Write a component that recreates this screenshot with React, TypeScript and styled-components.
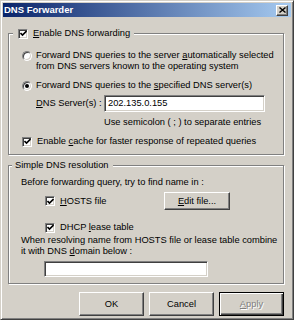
import React from 'react'
import styled, { createGlobalStyle } from 'styled-components'

const GlobalStyle = createGlobalStyle`
  html, body {
    margin: 0;
    padding: 0;
    background: #d4d0c8;
  }
  body {
    font-family: "Liberation Sans", Arial, sans-serif;
    font-size: 9.3px;
    color: #000;
  }
`

const Window = styled.div`
  width: 294px;
  height: 320px;
  box-sizing: border-box;
  padding: 2px;
  background: #d4d0c8;
  border: 1px solid;
  border-color: #d4d0c8 #404040 #404040 #d4d0c8;
  box-shadow: inset 1px 1px #fff, inset -1px -1px #808080;
  display: flex;
  flex-direction: column;
`

const TitleBar = styled.div`
  height: 14px;
  display: flex;
  align-items: center;
  justify-content: space-between;
  padding: 0 3px 0 1px;
  background: linear-gradient(to right, #0a246a, #a6caf0);
`

const TitleText = styled.span`
  color: #fff;
  font-weight: bold;
  font-size: 9.5px;
  line-height: 14px;
`

const CloseButton = styled.div`
  width: 12px;
  height: 11px;
  box-sizing: border-box;
  background: #d4d0c8;
  border: 1px solid;
  border-color: #fff #404040 #404040 #fff;
  box-shadow: inset -1px -1px #808080;
  display: flex;
  align-items: center;
  justify-content: center;
`

const Content = styled.div`
  padding: 0 7px 0 5px;
  display: flex;
  flex-direction: column;
`

const GroupBox = styled.fieldset<{ $mt: number }>`
  margin: ${p => p.$mt}px 0 0;
  padding: 0 0 ${p => p.$pb ?? 7}px;
  border: 1px solid #808080;
  box-shadow: inset 1px 1px #fff, 1px 1px #fff;
  min-width: 0;
  display: flex;
  flex-direction: column;
` as any

const Legend = styled.legend<{ $ml: number; $pl: number }>`
  margin-left: ${p => p.$ml}px;
  padding: 0 4px 0 ${p => p.$pl}px;
  height: 11px;
  line-height: 11px;
  background: #d4d0c8;
`

const LegendInner = styled.span`
  display: flex;
  align-items: center;
  gap: 5px;
  height: 11px;
`

const Row = styled.div<{ $mt?: number; $pl?: number; $gap?: number }>`
  display: flex;
  align-items: center;
  gap: ${p => p.$gap ?? 5}px;
  margin-top: ${p => p.$mt ?? 0}px;
  padding-left: ${p => p.$pl ?? 0}px;
  line-height: 11px;
  white-space: nowrap;
`

const TopRow = styled(Row)`
  align-items: flex-start;
`

const Text = styled.span<{ $w?: number }>`
  line-height: 11px;
  ${p => (p.$w ? `width: ${p.$w}px; flex-shrink: 0;` : '')}
`

const Box = styled.span`
  width: 10px;
  height: 10px;
  flex-shrink: 0;
  box-sizing: border-box;
  background: #fff;
  border: 1px solid;
  border-color: #808080 #fff #fff #808080;
  box-shadow: inset 1px 1px #404040, inset -1px -1px #d4d0c8;
  display: flex;
  align-items: center;
  justify-content: center;
`

const RadioCircle = styled.span<{ $on?: boolean }>`
  width: 10px;
  height: 10px;
  margin-top: 0.5px;
  flex-shrink: 0;
  box-sizing: border-box;
  border-radius: 50%;
  background: #fff;
  border: 1px solid;
  border-color: #808080 #fff #fff #808080;
  box-shadow: inset 1px 1px #404040, inset -1px -1px #d4d0c8;
  display: flex;
  align-items: center;
  justify-content: center;
  &::after {
    content: '';
    width: 4px;
    height: 4px;
    border-radius: 50%;
    background: ${p => (p.$on ? '#000' : 'transparent')};
  }
`

const Field = styled.div<{ $w: number; $h: number }>`
  width: ${p => p.$w}px;
  height: ${p => p.$h}px;
  box-sizing: border-box;
  background: #fff;
  border: 1px solid;
  border-color: #808080 #fff #fff #808080;
  box-shadow: inset 1px 1px #404040, inset -1px -1px #d4d0c8;
  padding: 0 3px;
  display: flex;
  align-items: center;
  line-height: 11px;
`

const Button = styled.div<{ $w: number; $h: number; $default?: boolean; $disabled?: boolean }>`
  width: ${p => p.$w}px;
  height: ${p => p.$h}px;
  box-sizing: border-box;
  background: #d4d0c8;
  border: 1px solid;
  border-color: ${p => (p.$default ? '#000' : '#fff #404040 #404040 #fff')};
  box-shadow: ${p =>
    p.$default
      ? 'inset 1px 1px #fff, inset -1px -1px #404040, inset -2px -2px #808080'
      : 'inset -1px -1px #808080'};
  display: flex;
  align-items: center;
  justify-content: center;
  color: ${p => (p.$disabled ? '#808080' : '#000')};
  text-shadow: ${p => (p.$disabled ? '1px 1px #fff' : 'none')};
  flex-shrink: 0;
`

const ButtonBar = styled.div`
  display: flex;
  justify-content: flex-end;
  gap: 5px;
  margin-top: 8px;
`

const Check = () => (
  <Box>
    <svg width="7" height="7" viewBox="0 0 7 7">
      <path d="M0.5 3 L2.5 5 L6.5 1" stroke="#000" strokeWidth="1.6" fill="none" />
    </svg>
  </Box>
)

export default function App() {
  return (
    <>
      <GlobalStyle />
      <Window>
        <TitleBar>
          <TitleText>DNS Forwarder</TitleText>
          <CloseButton>
            <svg width="7" height="6" viewBox="0 0 7 6">
              <path d="M0.5 0.5 L6.5 5.5 M6.5 0.5 L0.5 5.5" stroke="#000" strokeWidth="1.4" />
            </svg>
          </CloseButton>
        </TitleBar>
        <Content>
          <GroupBox $mt={11} $pb={7}>
            <Legend $ml={4} $pl={5}>
              <LegendInner>
                <Check />
                <span><u>E</u>nable DNS forwarding</span>
              </LegendInner>
            </Legend>
            <TopRow $mt={11} $pl={13} $gap={4}>
              <RadioCircle />
              <Text>
                Forward DNS queries to the server <u>a</u>utomatically selected
                <br />
                from DNS servers known to the operating system
              </Text>
            </TopRow>
            <Row $mt={8} $pl={13} $gap={4}>
              <RadioCircle $on />
              <Text>Forward DNS queries to the <u>s</u>pecified DNS server(s)</Text>
            </Row>
            <Row $mt={4} $pl={27} $gap={0}>
              <Text $w={68}><u>D</u>NS Server(s) :</Text>
              <Field $w={161} $h={17}>202.135.0.155</Field>
            </Row>
            <Row $mt={5} $pl={95}>
              <Text>Use semicolon ( ; ) to separate entries</Text>
            </Row>
            <Row $mt={8} $pl={13}>
              <Check />
              <Text>Enable <u>c</u>ache for faster response of repeated queries</Text>
            </Row>
          </GroupBox>

          <GroupBox $mt={5} $pb={6}>
            <Legend $ml={3} $pl={3}>
              <LegendInner>Simple DNS resolution</LegendInner>
            </Legend>
            <Row $mt={6} $pl={12}>
              <Text>Before forwarding query, try to find name in :</Text>
            </Row>
            <Row $mt={4} $pl={36} $gap={0}>
              <Row $gap={5}>
                <Check />
                <Text $w={104}><u>H</u>OSTS file</Text>
              </Row>
              <Button $w={66} $h={18}><u>E</u>dit file...</Button>
            </Row>
            <Row $mt={12} $pl={36}>
              <Check />
              <Text>DHCP <u>l</u>ease table</Text>
            </Row>
            <Row $mt={2} $pl={12}>
              <Text>
                When resolving name from HOSTS file or lease table combine
                <br />
                it with DNS <u>d</u>omain below :
              </Text>
            </Row>
            <Row $mt={4} $pl={35}>
              <Field $w={164} $h={16} />
            </Row>
          </GroupBox>

          <ButtonBar>
            <Button $w={65} $h={24}>OK</Button>
            <Button $w={65} $h={24}>Cancel</Button>
            <Button $w={65} $h={24} $default $disabled><u>A</u>pply</Button>
          </ButtonBar>
        </Content>
      </Window>
    </>
  )
}
